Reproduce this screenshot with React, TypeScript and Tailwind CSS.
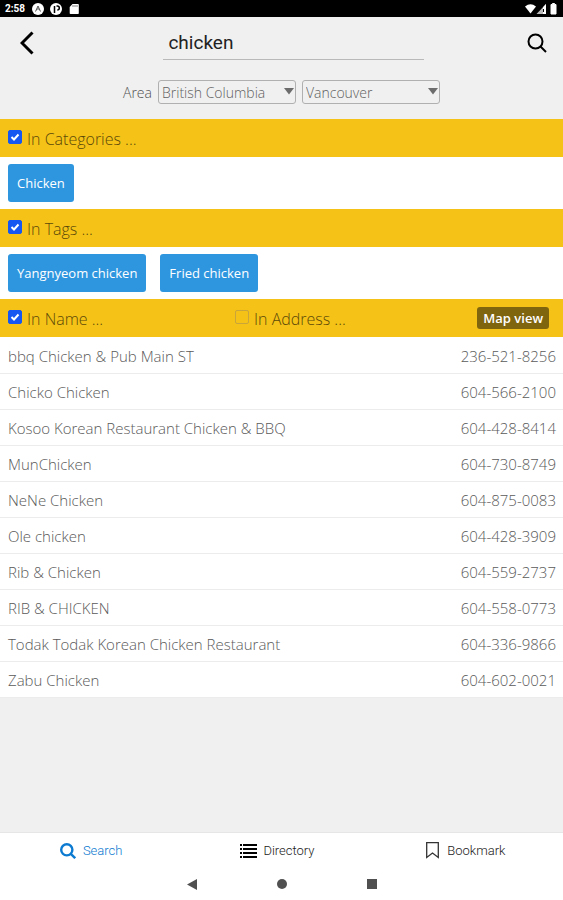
import { ReactNode, useState } from "react";

interface Place {
  name: string;
  phone: string;
}

const places: Place[] = [
  { name: "bbq Chicken & Pub Main ST", phone: "236-521-8256" },
  { name: "Chicko Chicken", phone: "604-566-2100" },
  { name: "Kosoo Korean Restaurant Chicken & BBQ", phone: "604-428-8414" },
  { name: "MunChicken", phone: "604-730-8749" },
  { name: "NeNe Chicken", phone: "604-875-0083" },
  { name: "Ole chicken", phone: "604-428-3909" },
  { name: "Rib & Chicken", phone: "604-559-2737" },
  { name: "RIB & CHICKEN", phone: "604-558-0773" },
  { name: "Todak Todak Korean Chicken Restaurant", phone: "604-336-9866" },
  { name: "Zabu Chicken", phone: "604-602-0021" },
];

function StatusBar() {
  return (
    <div className="flex h-[17px] items-center justify-between bg-black pl-[5px] pr-1 text-white">
      <div className="flex items-center gap-[6px]">
        <span className="w-[21px] font-['Roboto',sans-serif] text-[10px] leading-[16px] font-bold">2:58</span>
        <svg viewBox="0 0 12 12" className="h-3 w-3">
          <circle cx="6" cy="6" r="6" fill="#fff" />
          <path d="M3.5 8.5 6 3l2.5 5.5M4.5 6.8 6 5.6l1.5 1.2" stroke="#555" fill="none" />
        </svg>
        <svg viewBox="0 0 12 12" className="h-3 w-3">
          <circle cx="6" cy="6" r="6" fill="#fff" />
          <path d="M4.5 10V3M6.5 3h.8a1.8 1.8 0 0 1 0 4" stroke="#000" strokeWidth="1.5" fill="none" />
        </svg>
        <svg viewBox="0 0 12 12" className="h-3 w-3">
          <path d="M4.5 1H10a.8.8 0 0 1 .8.8v8.4a.8.8 0 0 1-.8.8H2.5a.8.8 0 0 1-.8-.8V4z" fill="#fff" />
          <path d="M5 2v2M7 2v2M9 2v2" stroke="#666" strokeWidth=".8" />
        </svg>
      </div>
      <svg viewBox="0 0 34 12" className="h-3 w-[34px]">
        <path d="M0 3.5Q5.5-1 11 3.5L5.5 10.5z" fill="#fff" />
        <path d="M21 1v10H11.5z" fill="#bbb" />
        <path d="M21 1v10h-3V4.2z" fill="#fff" />
        <path d="M18.5 6v3" stroke="#000" />
        <path d="M26 1.5h1.500V.5h2v1H31V11h-5z" fill="#fff" stroke="#fff" strokeLinejoin="round" />
      </svg>
    </div>
  );
}

function SearchIcon({ className, strokeWidth }: { className: string; strokeWidth: number }) {
  return (
    <svg viewBox="0 0 20 20" className={className} fill="none" stroke="currentColor" strokeWidth={strokeWidth}>
      <circle cx="8.5" cy="8.5" r="7" />
      <path d="m13.5 13.5 5.5 5.5" />
    </svg>
  );
}

function AreaSelect({ label, value }: { label: string; value: string }) {
  return (
    <div className="relative w-[138px]">
      <select
        aria-label={label}
        defaultValue={value}
        className="block h-6 w-full appearance-none rounded-[3px] border border-[#b0b0b0] bg-[#f0f0f0] pt-[2px] pl-[3px] pr-4 text-[14px] leading-[20px] font-light text-[#606060]"
      >
        <option>{value}</option>
      </select>
      <svg viewBox="0 0 10 7" className="pointer-events-none absolute top-2 right-[2px] h-[7px] w-[10px]">
        <path d="M0 0h10L5 6.5z" fill="#6c6c6c" />
      </svg>
    </div>
  );
}

function CheckLabel({ label, initial }: { label: string; initial: boolean }) {
  const [checked, setChecked] = useState(initial);

  return (
    <label className="flex items-center gap-[5px] pt-[2px] text-[16px] leading-[22px] font-light text-[#5c4909]">
      <span className="relative -mt-1 h-[14px] w-[14px]">
        <input
          type="checkbox"
          checked={checked}
          onChange={(e) => setChecked(e.target.checked)}
          className="block h-[14px] w-[14px] appearance-none rounded-[2px] border border-[#c9a53a] checked:border-[#1557f0] checked:bg-[#1557f0]"
        />
        {checked && (
          <svg viewBox="0 0 14 14" className="pointer-events-none absolute inset-0 h-[14px] w-[14px]">
            <path d="m3.5 7 2.5 2.5 4.5-5" stroke="#fff" strokeWidth="2" fill="none" />
          </svg>
        )}
      </span>
      {label}
    </label>
  );
}

function Chip({ children }: { children: ReactNode }) {
  return (
    <button className="h-[38px] rounded-[3px] bg-[#2e96df] px-[9px] text-[13px] leading-[20px] font-medium text-white">
      {children}
    </button>
  );
}

function SectionBar({ children }: { children: ReactNode }) {
  return <div className="flex h-[38px] items-center bg-[#f5c317] px-2">{children}</div>;
}

function ChipRow({ children }: { children: ReactNode }) {
  return <div className="flex h-[52px] items-center gap-[14px] bg-white px-2">{children}</div>;
}

export default function App() {
  const [query, setQuery] = useState("chicken");

  return (
    <div className="flex min-h-screen flex-col bg-[#f0f0f0] font-['Open_Sans',sans-serif]">
      <StatusBar />

      {/* Search header */}
      <header className="pb-[15px]">
        <div className="flex h-[51px] items-center justify-between px-4">
          <button aria-label="Back" className="w-14 pl-1">
            <svg viewBox="0 0 14 24" className="h-6 w-[14px]" fill="none" stroke="#000" strokeWidth="3">
              <path d="M12.5 1.5 2 12l10.500 10.5" />
            </svg>
          </button>
          <input
            aria-label="Search"
            value={query}
            onChange={(e) => setQuery(e.target.value)}
            className="h-[35px] w-[49%] border-b border-[#b9b9b9] pl-[5px] font-['Roboto',sans-serif] text-[19px] text-[#222] outline-none"
          />
          <button aria-label="Run search" className="flex w-8 justify-end">
            <SearchIcon className="h-5 w-5 shrink-0 text-black" strokeWidth={2} />
          </button>
        </div>
        <div className="mt-3 flex items-center justify-center gap-[6px] text-[14px] leading-[20px] font-light text-[#505050]">
          <span className="pt-[2px]">Area</span>
          <AreaSelect label="Province" value="British Columbia" />
          <AreaSelect label="City" value="Vancouver" />
        </div>
      </header>

      <main className="flex-1">
        <SectionBar>
          <CheckLabel label="In Categories ..." initial />
        </SectionBar>
        <ChipRow>
          <Chip>Chicken</Chip>
        </ChipRow>

        <SectionBar>
          <CheckLabel label="In Tags ..." initial />
        </SectionBar>
        <ChipRow>
          <Chip>Yangnyeom chicken</Chip>
          <Chip>Fried chicken</Chip>
        </ChipRow>

        <SectionBar>
          <div className="w-[227px]">
            <CheckLabel label="In Name ..." initial />
          </div>
          <CheckLabel label="In Address ..." initial={false} />
          <button className="mr-[6px] ml-auto h-[22px] rounded-[3px] bg-[#80650f] px-[6px] text-[13px] leading-[20px] font-semibold text-white">
            Map view
          </button>
        </SectionBar>

        {/* Results */}
        <table className="w-full bg-white text-[15px] leading-[20px] font-light text-[#5a5a5a]">
          <tbody>
            {places.map((p) => (
              <tr key={p.name} className="h-9 border-b border-[#ececec]">
                <td className="pt-[2px] pl-2">{p.name}</td>
                <td className="pt-[2px] pr-[7px] text-right">{p.phone}</td>
              </tr>
            ))}
          </tbody>
        </table>
      </main>

      {/* Tabs */}
      <nav className="grid h-9 grid-cols-3 border-t border-[#e6e6e6] bg-white pr-1 font-['Roboto',sans-serif] text-[13px] font-light text-[#222]">
        <a href="#search" className="flex items-center justify-center gap-[7px] pr-1 text-[#0b7ad0]">
          <SearchIcon className="h-4 w-4" strokeWidth={3} />
          Search
        </a>
        <a href="#directory" className="flex items-center justify-center gap-[6px] pr-1">
          <svg viewBox="0 0 17 14" className="h-[14px] w-[17px]" fill="#000">
            <path d="M0 0h2v2H0zM3 0h14v2H3zM0 4h2v2H0zM3 4h14v2H3zM0 8h2v2H0zM3 8h14v2H3zM0 12h2v2H0zM3 12h14v2H3z" />
          </svg>
          Directory
        </a>
        <a href="#bookmark" className="flex items-center justify-center gap-2">
          <svg viewBox="0 0 13 17" className="h-[17px] w-[13px]" fill="none" stroke="#333" strokeWidth="1.3">
            <path d="M.7.7h11.600V15.5L6.5 11 .7 15.5z" />
          </svg>
          Bookmark
        </a>
      </nav>

      {/* System buttons */}
      <div className="flex h-8 items-center justify-center gap-20 bg-white text-[#505050]">
        <button aria-label="System back">
          <svg viewBox="0 0 10 11" className="h-[11px] w-[10px]" fill="currentColor">
            <path d="M10 0v11L0 5.5z" />
          </svg>
        </button>
        <button aria-label="Home">
          <svg viewBox="0 0 10 10" className="h-[10px] w-[10px]" fill="currentColor">
            <circle cx="5" cy="5" r="5" />
          </svg>
        </button>
        <button aria-label="Overview">
          <svg viewBox="0 0 10 10" className="h-[10px] w-[10px]" fill="currentColor">
            <path d="M0 0h10v10H0z" />
          </svg>
        </button>
      </div>
    </div>
  );
}
